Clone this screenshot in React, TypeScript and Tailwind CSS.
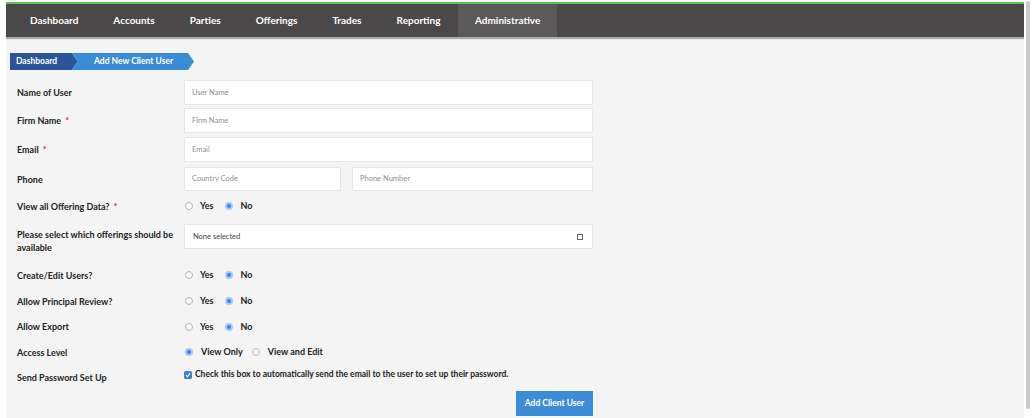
import React from "react";

const navItems = ["Dashboard", "Accounts", "Parties", "Offerings", "Trades", "Reporting", "Administrative"];

function Radio({ checked }: { checked: boolean }) {
  return checked ? (
    <span className="inline-flex h-[8px] w-[8px] items-center justify-center rounded-full bg-[#a9c8f6]">
      <span className="h-[4px] w-[4px] rounded-full bg-[#3f7fe6]" />
    </span>
  ) : (
    <span className="inline-block h-[8px] w-[8px] rounded-full border border-[#b5b5b5] bg-white" />
  );
}

function YesNo() {
  return (
    <div className="flex items-center text-[9px] font-bold text-[#222]">
      <span className="ml-[1px] flex"><Radio checked={false} /></span>
      <span className="ml-[7px]">Yes</span>
      <span className="ml-[11px] flex"><Radio checked={true} /></span>
      <span className="ml-[8px]">No</span>
    </div>
  );
}

function Label({ children, req }: { children: React.ReactNode; req?: boolean }) {
  return (
    <div className="w-[167px] shrink-0 text-[9px] font-bold leading-[13px] text-[#222]">
      {children}
      {req && <span className="ml-[4px] align-top text-[#e0302f]">*</span>}
    </div>
  );
}

function TextInput({ placeholder, className }: { placeholder: string; className: string }) {
  return (
    <div className={"flex shrink-0 items-center border border-[#e6e6e6] bg-white pl-[7px] text-[7.5px] text-[#8f8f8f] " + className}>
      {placeholder}
    </div>
  );
}

export default function App() {
  return (
    <div className="h-[418px] w-[1032px] overflow-hidden bg-white font-['Lato',sans-serif]">
      <div className="flex h-full">
        <div className="ml-[6px] h-full w-[1018px] shrink-0 bg-[#f4f4f4]">
          <div className="h-[2px] bg-white" />
          <div className="h-[2px] bg-[#5cc35c]" />
          <div className="flex h-[33px] items-stretch bg-[#4a4848] text-[10px] font-bold text-white">
            {navItems.map((n, i) => (
              <div
                key={n}
                className={
                  "flex items-center " +
                  (i === 6 ? "bg-[#5b5959] px-[17px]" : i === 0 ? "pl-[24px] pr-[17.5px]" : "px-[17.5px]")
                }
              >
                {n}
              </div>
            ))}
          </div>
          <div className="h-[2px] bg-[#a9a9a9]" />
          <div className="h-[1px] bg-[#e8e8e8]" />

          <div className="mt-[13px] ml-[4px] flex h-[17px] items-stretch text-[8.5px] font-bold text-white">
            <div className="relative flex w-[62px] items-center bg-[#2a5597] pl-[6px]">
              Dashboard
            </div>
            <svg width="6" height="17" viewBox="0 0 6 17" className="block">
              <rect width="6" height="17" fill="#3a8cd6" />
              <polygon points="0,0 6,8.5 0,17" fill="#2a5597" />
              <polyline points="0,0 6,8.5 0,17" fill="none" stroke="#6fa9e0" strokeWidth="0.8" />
            </svg>
            <div className="flex w-[110px] items-center bg-[#3a8cd6] pl-[16px]">Add New Client User</div>
            <svg width="6" height="17" viewBox="0 0 6 17" className="block">
              <polygon points="0,0 6,8.5 0,17" fill="#3a8cd6" />
            </svg>
          </div>

          <div className="ml-[11px]">
            <div className="mt-[10px] flex items-center">
              <Label>Name of User</Label>
              <TextInput placeholder="User Name" className="h-[25px] w-[409px]" />
            </div>
            <div className="mt-[3px] flex items-center">
              <Label req>Firm Name</Label>
              <TextInput placeholder="Firm Name" className="h-[25px] w-[409px]" />
            </div>
            <div className="mt-[4px] flex items-center">
              <Label req>Email</Label>
              <TextInput placeholder="Email" className="h-[25px] w-[409px]" />
            </div>
            <div className="mt-[5px] flex items-center">
              <Label>Phone</Label>
              <TextInput placeholder="Country Code" className="h-[24px] w-[157px]" />
              <TextInput placeholder="Phone Number" className="ml-[11px] h-[24px] w-[241px]" />
            </div>
            <div className="mt-[1px] flex h-[28px] items-center">
              <Label req>View all Offering Data?</Label>
              <YesNo />
            </div>
            <div className="mt-[4px] flex items-start">
              <div className="pt-[4px]">
                <Label>
                  Please select which offerings should be
                  <br />
                  available
                </Label>
              </div>
              <div className="flex h-[25px] w-[409px] shrink-0 items-center justify-between border border-[#e6e6e6] bg-white pl-[8px] pr-[9px] text-[7.5px] text-[#444]">
                <span>None selected</span>
                <span className="h-[6px] w-[6px] border-[1.5px] border-[#666]" />
              </div>
            </div>
            <div className="mt-[8px] flex h-[26px] items-center">
              <Label>Create/Edit Users?</Label>
              <YesNo />
            </div>
            <div className="flex h-[26px] items-center">
              <Label>Allow Principal Review?</Label>
              <YesNo />
            </div>
            <div className="flex h-[25px] items-center">
              <Label>Allow Export</Label>
              <YesNo />
            </div>
            <div className="flex h-[26px] items-center">
              <Label>Access Level</Label>
              <div className="flex items-center text-[9px] font-bold text-[#222]">
                <span className="ml-[1px] flex"><Radio checked={true} /></span>
                <span className="ml-[8px]">View Only</span>
                <span className="ml-[9px] flex"><Radio checked={false} /></span>
                <span className="ml-[8px]">View and Edit</span>
              </div>
            </div>
            <div className="flex h-[25px] items-center">
              <Label>Send Password Set Up</Label>
              <div className="-mt-[6px] flex items-center text-[8.5px] font-bold text-[#222]">
                <span className="flex h-[8px] w-[8px] items-center justify-center rounded-[1.5px] bg-[#3c7fe0]">
                  <svg width="6" height="6" viewBox="0 0 6 6">
                    <polyline points="1,3.2 2.4,4.6 5,1.4" fill="none" stroke="white" strokeWidth="1.2" />
                  </svg>
                </span>
                <span className="ml-[3px]">Check this box to automatically send the email to the user to set up their password.</span>
              </div>
            </div>
            <div className="mt-[1px] flex">
              <div className="ml-[499px] flex h-[25px] w-[77px] items-center justify-center bg-[#3c8dd8] text-[8.5px] font-bold text-white">
                Add Client User
              </div>
            </div>
          </div>
        </div>
        <div className="ml-[2px] mt-[1px] h-[408px] w-[4px] rounded-full bg-[#c9c9c9]" />
      </div>
    </div>
  );
}
